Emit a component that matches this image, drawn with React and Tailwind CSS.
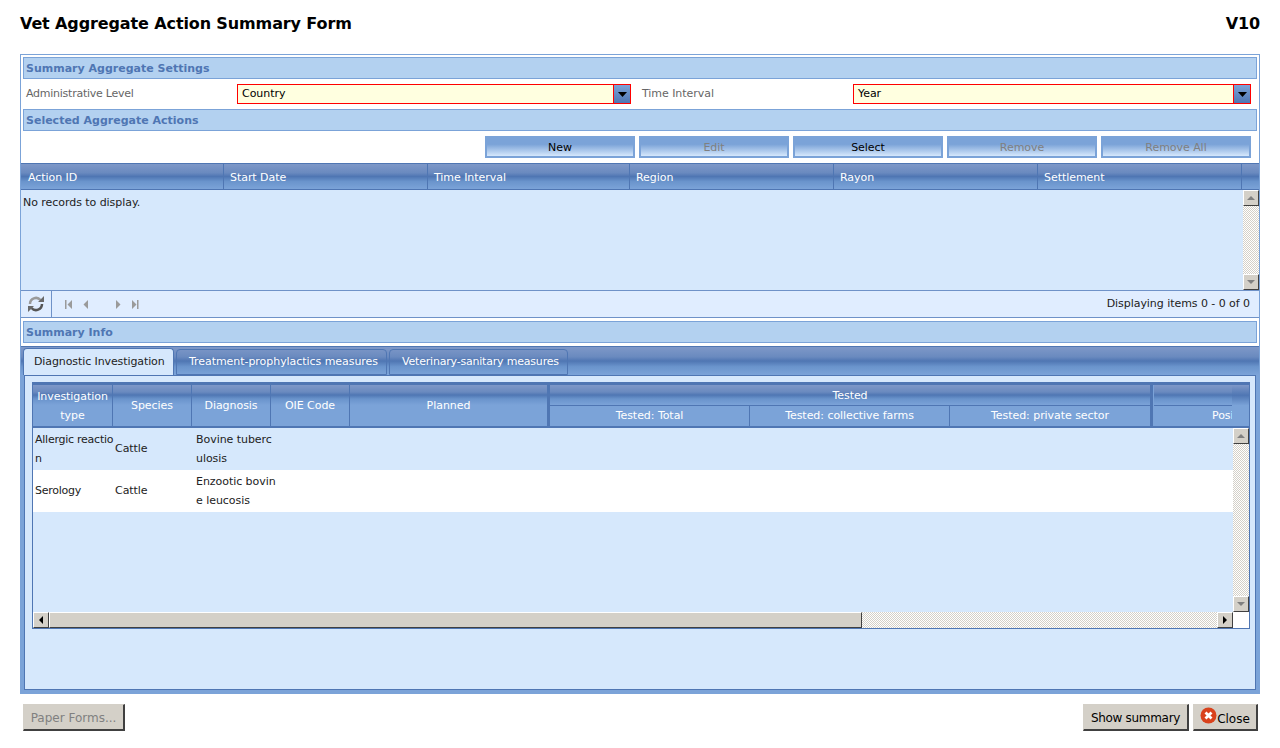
const HEAD = "bg-[linear-gradient(to_bottom,#7e98c8_0%,#6a8abf_35%,#4f76b3_50%,#6a94cc_70%,#7ba3d8_100%)]";
const DITHER = "bg-[repeating-conic-gradient(#d4d0c8_0_25%,#ffffff_0_50%)] bg-[length:2px_2px]";

function SectionBar({ title }) {
  return (
    <div className="mx-[2px] h-[22px] border border-[#7ba3d8] bg-[#b3d1f0] pl-[2px] text-[11px] leading-[21px] font-bold tracking-normal text-[#4f76b3]">
      {title}
    </div>
  );
}

function Combo({ label, value, labelW, w, labelClass }) {
  return (
    <div className="flex items-center">
      <div className={`${labelW} ${labelClass} pl-[5px] text-[#666666]`}>{label}</div>
      <div className={`${w} flex h-[20px] border border-[#ff0000] bg-[#ffffe0]`}>
        <div className="flex-1 pl-[4px] leading-[18px] text-black">{value}</div>
        <div className="flex w-[17px] items-center justify-center border-l border-[#ff0000] bg-[linear-gradient(to_bottom,#7ba3d8,#4f76b3)]">
          <svg width="9" height="5" viewBox="0 0 9 5"><path d="M0 0h9L4.5 5z" fill="#000" /></svg>
        </div>
      </div>
    </div>
  );
}

function ActionButton({ children, disabled }) {
  return (
    <div
      className={`h-[22px] w-[150px] border-2 border-[#7ba3d8] bg-[linear-gradient(to_bottom,#7ba3d8_0%,#7ba3d8_35%,#d6e8fc_100%)] text-center leading-[20px] ${
        disabled ? "text-[#808080]" : "text-black"
      }`}
    >
      {children}
    </div>
  );
}

function ScrollBtn({ dir, disabled }) {
  const paths = {
    up: "M0 4L4 0l4 4z",
    down: "M0 0h8L4 4z",
    left: "M4 0v8L0 4z",
    right: "M0 0v8l4-4z",
  };
  const box = dir === "up" || dir === "down" ? "0 0 8 4" : "0 0 4 8";
  const size = dir === "up" || dir === "down" ? { width: 8, height: 4 } : { width: 4, height: 8 };
  return (
    <div className="flex h-[16px] w-[16px] shrink-0 items-center justify-center border border-b-[#404040] border-l-white border-r-[#404040] border-t-white bg-[#d4d0c8]">
      <svg {...size} viewBox={box}><path d={paths[dir]} fill={disabled ? "#808080" : "#000"} /></svg>
    </div>
  );
}

function VScroll({ h }) {
  return (
    <div className={`flex ${h} w-[16px] shrink-0 flex-col justify-between ${DITHER}`}>
      <ScrollBtn dir="up" disabled />
      <ScrollBtn dir="down" disabled />
    </div>
  );
}

function ClassicButton({ children, className, disabled }) {
  return (
    <div
      className={`flex h-[27px] items-center justify-center border border-b-2 border-r-2 border-b-[#404040] border-l-[#d4d0c8] border-r-[#404040] border-t-[#d4d0c8] bg-[#d4d0c8] text-[12px] ${
        disabled ? "text-[#808080]" : "text-black"
      } ${className}`}
    >
      {children}
    </div>
  );
}

function PagerArrow({ d }) {
  return (
    <svg width="8" height="9" viewBox="0 0 8 9"><path d={d} fill="#9a9a9a" /></svg>
  );
}

const actionCols = [
  ["Action ID", "w-[203px] pl-[7px]"],
  ["Start Date", "w-[204px] pl-[6px]"],
  ["Time Interval", "w-[202px] pl-[6px]"],
  ["Region", "w-[204px] pl-[6px]"],
  ["Rayon", "w-[204px] pl-[6px]"],
  ["Settlement", "w-[204px] pl-[6px]"],
];

const rows = [
  { type: ["Allergic reactio", "n"], species: "Cattle", diag: ["Bovine tuberc", "ulosis"], bg: "bg-[#d6e8fc]" },
  { type: ["Serology"], species: "Cattle", diag: ["Enzootic bovin", "e leucosis"], bg: "bg-white" },
];

function HeadCell({ w, children }) {
  return (
    <div className={`${w} flex shrink-0 items-center justify-center border-r border-[#4f76b3] text-center leading-[19px] whitespace-nowrap text-white`}>
      {children}
    </div>
  );
}

export default function App() {
  return (
    <div className="h-[748px] w-[1280px] overflow-hidden bg-white px-[20px] font-['DejaVu_Sans',sans-serif] text-[11px] tracking-[-0.05px] text-black">
      <div className="flex h-[54px] items-start justify-between pt-[13px] text-[16px] leading-[22px] font-bold tracking-[-0.12px]">
        <div>Vet Aggregate Action Summary Form</div>
        <div>V10</div>
      </div>

      <div className="h-[640px] w-[1240px] border border-[#7ba3d8] pt-[2px]">
        <SectionBar title="Summary Aggregate Settings" />
        <div className="flex h-[30px] items-center">
          <Combo label="Administrative Level" value="Country" labelW="w-[216px]" labelClass="tracking-[-0.25px]" w="w-[394px]" />
          <div className="w-[6px]" />
          <Combo label="Time Interval" value="Year" labelW="w-[216px]" labelClass="" w="w-[398px]" />
        </div>
        <SectionBar title="Selected Aggregate Actions" />

        <div className="flex h-[32px] items-start justify-end gap-[4px] pt-[5px] pr-[8px]">
          <ActionButton>New</ActionButton>
          <ActionButton disabled>Edit</ActionButton>
          <ActionButton>Select</ActionButton>
          <ActionButton disabled>Remove</ActionButton>
          <ActionButton disabled>Remove All</ActionButton>
        </div>

        <div className={`flex h-[27px] border-y border-[#4f76b3] ${HEAD}`}>
          {actionCols.map(([name, w]) => (
            <div key={name} className={`${w} border-r border-[#4f76b3] leading-[27px] text-white`}>
              {name}
            </div>
          ))}
        </div>
        <div className="flex h-[100px] bg-[#d6e8fc]">
          <div className="flex-1 pt-[5px] pl-[2px] text-[#222222]">No records to display.</div>
          <VScroll h="h-[100px]" />
        </div>
        <div className="flex h-[28px] items-center justify-between border-y border-[#6f92c8] bg-[#e0edff] pr-[9px] text-[#222222]">
          <div className="flex h-full items-center">
            <div className="flex h-full w-[31px] items-center justify-center border-r border-[#6f92c8]">
              <svg width="18" height="18" viewBox="0 0 18 18" fill="none">
                <path d="M3 9a6 6 0 0 1 10.500-4" stroke="#9a9a9a" strokeWidth="2.500" />
                <path d="M15 9a6 6 0 0 1-10.500 4" stroke="#555555" strokeWidth="2.500" />
                <path d="M11 7h6V1zM1 11h6l-6 6z" fill="#6a6a6a" />
              </svg>
            </div>
            <div className="ml-[13px] flex items-center gap-[9px]">
              <PagerArrow d="M0 0h1.5v9H0zM7 0v9L2.5 4.500z" />
              <PagerArrow d="M6 0v9L1.500 4.500z" />
              <div className="w-[6px]" />
              <PagerArrow d="M2 0v9l4.500-4.500z" />
              <PagerArrow d="M1 0v9l4.500-4.500zM6 0h1.500v9H6z" />
            </div>
          </div>
          <div>Displaying items 0 - 0 of 0</div>
        </div>

        <div className="h-[3px]" />
        <SectionBar title="Summary Info" />
        <div className="h-[3px]" />

        <div className="flex h-[347px] flex-col border-t border-[#4f76b3] bg-[#7ba3d8]">
          <div className={`flex h-[28px] shrink-0 items-end gap-[2px] pl-[2px] tracking-[-0.1px] ${HEAD}`}>
            <div className="h-[27px] w-[151px] rounded-t-[4px] border border-b-0 border-[#4f76b3] bg-[#d6e8fc] pl-[10px] leading-[25px] text-[#222222]">
              Diagnostic Investigation
            </div>
            <div className="h-[26px] w-[211px] rounded-t-[4px] border border-[#4f76b3] pl-[12px] leading-[24px] tracking-[-0.05px] text-white">
              Treatment-prophylactics measures
            </div>
            <div className="h-[26px] w-[179px] rounded-t-[4px] border border-[#4f76b3] pl-[12px] leading-[24px] tracking-[-0.2px] text-white">
              Veterinary-sanitary measures
            </div>
          </div>
          <div className="flex-1 px-[3px] pb-[3px]">
            <div className="h-[315px] border border-[#4f76b3] bg-[#d6e8fc] pt-[6px] pl-[7px]">
              <div className="w-[1218px] border border-[#4f76b3]">
                <div className="flex h-[45px] border-y-2 border-[#4f76b3] bg-[#7ba3d8]">
                  <div className="flex h-full w-[1199px] shrink-0 overflow-hidden">
                    <div className="relative flex h-full shrink-0">
                      <div className={`absolute inset-x-0 top-0 h-[20px] ${HEAD}`} />
                      <div className="relative flex">
                        <HeadCell w="w-[80px]"><div>Investigation<br />type</div></HeadCell>
                        <HeadCell w="w-[79px]">Species</HeadCell>
                        <HeadCell w="w-[79px]">Diagnosis</HeadCell>
                        <HeadCell w="w-[79px]">OIE Code</HeadCell>
                        <HeadCell w="w-[198px]">Planned</HeadCell>
                      </div>
                    </div>
                    <div className="flex w-[604px] shrink-0 flex-col border-x-2 border-[#4f76b3]">
                      <div className={`h-[21px] border-b border-[#4f76b3] text-center leading-[21px] text-white ${HEAD}`}>Tested</div>
                      <div className="flex h-[20px] leading-[20px] text-white">
                        <div className="w-[200px] border-r border-[#4f76b3] text-center">Tested: Total</div>
                        <div className="w-[200px] border-r border-[#4f76b3] text-center">Tested: collective farms</div>
                        <div className="w-[200px] text-center">Tested: private sector</div>
                      </div>
                    </div>
                    <div className="flex flex-1 flex-col border-l border-[#4f76b3] pl-[1px]">
                      <div className={`h-[21px] border-b border-[#4f76b3] ${HEAD}`} />
                      <div className="h-[20px] overflow-hidden pl-[58px] leading-[20px] text-white">Posi</div>
                    </div>
                  </div>
                  <div className="h-full w-[17px] shrink-0 bg-[linear-gradient(to_bottom,#7e98c8_0%,#4f76b3_25%,#7ba3d8_50%,#7ba3d8_100%)]" />
                </div>

                <div className="flex h-[184px]">
                  <div className="h-full w-[1200px] shrink-0 text-[#222222]">
                    {rows.map((r) => (
                      <div key={r.type[0]} className={`flex h-[42px] items-center leading-[19px] whitespace-nowrap ${r.bg}`}>
                        <div className={`w-[80px] pl-[2px] tracking-[-0.25px] ${r.type.length === 1 ? "pb-[2px]" : ""}`}>
                          {r.type.map((t) => <div key={t}>{t}</div>)}
                        </div>
                        <div className="w-[83px] pb-[2px] pl-[2px]">{r.species}</div>
                        <div className="w-[80px]">
                          {r.diag.map((t) => <div key={t}>{t}</div>)}
                        </div>
                      </div>
                    ))}
                  </div>
                  <VScroll h="h-[184px]" />
                </div>

                <div className="flex h-[16px]">
                  <div className={`flex w-[1200px] shrink-0 ${DITHER}`}>
                    <ScrollBtn dir="left" />
                    <div className="h-[16px] w-[813px] border border-b-[#404040] border-l-white border-r-[#404040] border-t-white bg-[#d4d0c8]" />
                    <div className="flex-1" />
                    <ScrollBtn dir="right" />
                  </div>
                  <div className="flex-1 bg-white" />
                </div>
              </div>
            </div>
          </div>
        </div>
      </div>

      <div className="flex items-start justify-between pt-[10px] pr-[2px] pl-[3px]">
        <ClassicButton disabled className="w-[102px] pt-[1px] tracking-normal">Paper Forms...</ClassicButton>
        <div className="flex gap-[4px]">
          <ClassicButton className="w-[106px] pt-[1px] tracking-[-0.3px]">Show summary</ClassicButton>
          <ClassicButton className="w-[65px] tracking-normal">
            <svg width="17" height="17" viewBox="0 0 17 17" className="mb-[3px]">
              <circle cx="8.500" cy="8.500" r="8" fill="#d9421c" />
              <path d="M5.500 5.500l6 6M11.500 5.500l-6 6" stroke="#fff" strokeWidth="2.800" />
            </svg>
            <span className="pt-[3px]">Close</span>
          </ClassicButton>
        </div>
      </div>
    </div>
  );
}
